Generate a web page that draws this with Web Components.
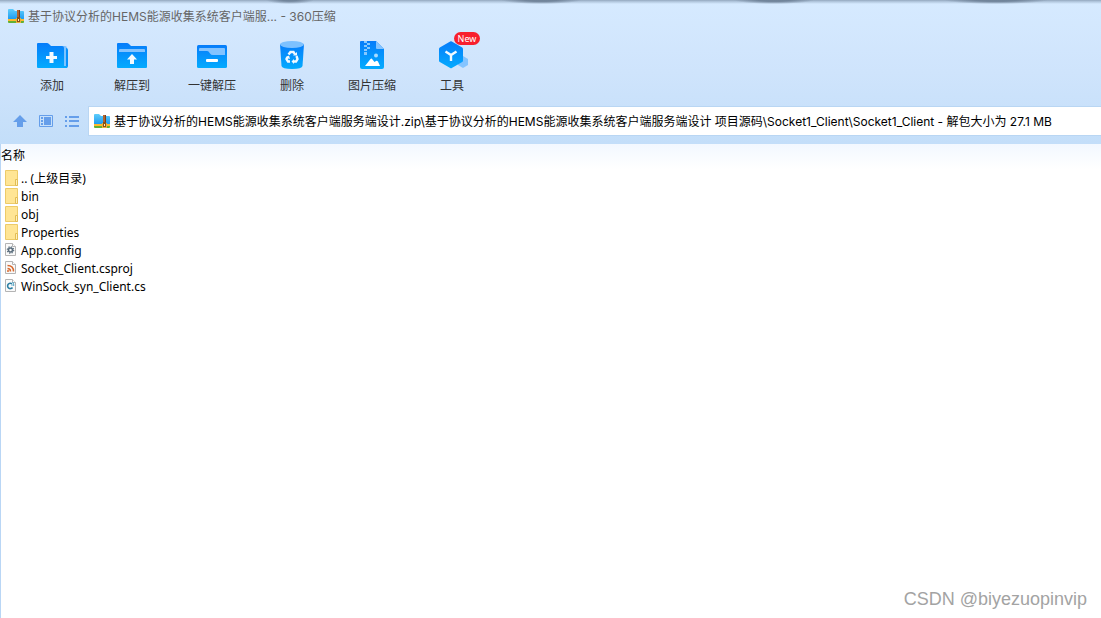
<!DOCTYPE html>
<html lang="zh-CN">
<head>
<meta charset="utf-8">
<meta name="viewport" content="width=device-width, initial-scale=1">
<title>360压缩</title>
<style>
html, body { height: 100%; margin: 0; }
body { font: 12px/18px "Noto Sans", "Noto Sans CJK SC", sans-serif; color: #000; background: #fff; }
</style>
</head>
<body>
<archive-window>
  <title-bar slot="top">基于协议分析的HEMS能源收集系统客户端服... - 360压缩</title-bar>
  <tool-bar slot="top">
    <tool-button icon="add">添加</tool-button>
    <tool-button icon="extract">解压到</tool-button>
    <tool-button icon="quick">一键解压</tool-button>
    <tool-button icon="trash">删除</tool-button>
    <tool-button icon="image">图片压缩</tool-button>
    <tool-button icon="tools" badge="New">工具</tool-button>
  </tool-bar>
  <address-bar slot="top" value="基于协议分析的HEMS能源收集系统客户端服务端设计.zip\基于协议分析的HEMS能源收集系统客户端服务端设计 项目源码\Socket1_Client\Socket1_Client - 解包大小为 27.1 MB"></address-bar>
  <file-list></file-list>
  <water-mark slot="mark">CSDN @biyezuopinvip</water-mark>
</archive-window>

<script>
const blue = id => `<defs><linearGradient id="${id}" x1="0" y1="0" x2="0" y2="1"><stop offset="0" stop-color="#067cfa"/><stop offset="1" stop-color="#04abfe"/></linearGradient></defs>`;
const page = '<path d="M.5 .5H7.500L10.500 3.500V12.500H.5Z" fill="#fafafa" stroke="#b4b4b4"/><path d="M7.500 .5V3.500H10.500" fill="#fff" stroke="#b4b4b4"/>';

const ICONS = {
  app: [16, 16, `<defs><linearGradient id="a" x1="0" y1="0" x2="0" y2="1"><stop offset="0" stop-color="#5fcdfb"/><stop offset="1" stop-color="#1e9cf0"/></linearGradient></defs>
    <path d="M0 2Q0 1 1 1H5L7 3H15Q16 3 16 4V11H0Z" fill="url(#a)"/>
    <path d="M0 11H16V13H0Z" fill="#ffb92c"/><path d="M0 13H16V14Q16 15 15 15H1Q0 15 0 14Z" fill="#62b035"/>
    <path d="M9 2H11V11H9Z" fill="#b0652f"/><path d="M11 2H12V11H11Z" fill="#7b3d1a"/>
    <path d="M8 10H13V15H8Z" fill="#e9b03a"/><path d="M9 9H12V14H9Z" fill="#8a5016"/><path d="M10 11H11V13H10Z" fill="#fff1b5"/>`],
  add: [32, 32, `${blue('g')}<path d="M12 6H29Q31 6 31 8V24H12Z" fill="#7dc0ff"/><path d="M30 8Q32 8 32 10V26Q32 28 30 28Z" fill="#0791fc"/>
    <path d="M1 4Q1 3 2 3H11Q12 3 13 4L15 6H26Q28 6 28 8V28H2Q1 28 1 27Z" fill="url(#g)"/><path d="M28 8H30V28H28Z" fill="#7dc4ff"/><path d="M27 26H31V28H27Z" fill="#05a7fe"/>
    <path d="M13.500 12H17.500V16H21V19H17.500V23H13.500V19H10V16H13.500Z" fill="#f3faff"/>`],
  extract: [32, 32, `${blue('g')}<path d="M1 4Q1 3 2 3H11Q12 3 13 4L15 6H30Q31 6 31 7V27Q31 28 30 28H2Q1 28 1 27Z" fill="url(#g)"/>
    <path d="M3 12V10Q3 9 4 9H28Q29 9 29 10V12Z" fill="#83c3ff"/><path d="M16 14L21 19.500H18V24H14V19.500H11Z" fill="#f3faff"/>`],
  quick: [32, 32, `${blue('g')}<rect x="1" y="5" width="30" height="23" rx="1.500" fill="url(#g)"/>
    <path d="M3 10V9Q3 8 4 8H28Q29 8 29 9V15H17Q15 15 14 13.500L12.500 11.500Q12 11 11 11H3Z" fill="#83c3ff"/><rect x="10" y="19" width="12" height="3" rx="1" fill="#fff"/>`],
  trash: [32, 32, `${blue('g')}<path d="M4 4H28L26.500 26Q26 29 16 29Q6 29 5.500 26Z" fill="url(#g)"/><ellipse cx="16" cy="4.500" rx="12" ry="3.500" fill="#7dc1ff"/>
    <g fill="none" stroke="#f3faff" stroke-width="2.400"><path d="M12.500 14.500L14.500 12H17.500L19 14.500"/><path d="M20.500 16L21.500 19L20 21.500H17"/><path d="M14 21.500H12L10.500 19L12 16.500"/></g>
    <g fill="#f3faff"><path d="M17 15.500H21V12Z"/><path d="M18 19V24L15.500 21.500Z"/><path d="M9.500 17.500L13 15.500L14 19Z"/></g>`],
  image: [32, 32, `${blue('g')}<path d="M5 1H20L28 9V27Q28 29 26 29H6Q4 29 4 27V2Q4 1 5 1Z" fill="url(#g)"/><path d="M20 1L28 9H21Q20 9 20 8Z" fill="#85c4ff"/>
    <path d="M8 1H11V3H8ZM11 3H14V5H11ZM8 5H11V7H8ZM11 7H14V9H11ZM8 9H11V11H8Z" fill="#86c8ff"/><path d="M8 12H11V15H8Z" fill="#86c8ff"/>
    <circle cx="20" cy="15.500" r="2" fill="#a9dcff"/><path d="M9 26L14.500 19Q15.500 18 16.500 19.500L18.500 22L20 21Q21 20.500 22 21.500L24 26Z" fill="#fff"/>`],
  tools: [32, 32, `${blue('g')}<path d="M27 16L32 19V25L27 28L22 25V19Z" fill="#84c4ff"/><path d="M14.200 1.600Q15 1 15.800 1.600L26.200 7.500Q27 8 27 9V20.500Q27 21.500 26.200 22L15.800 28Q15 28.500 14.200 28L3.800 22Q3 21.500 3 20.500V9Q3 8 3.800 7.500Z" fill="url(#g)"/>
    <path d="M9.500 11.500L15 15L20.500 11.500M15 15V21" fill="none" stroke="#f1f9ff" stroke-width="2.400"/>`],
  up: [14, 14, '<path d="M7 1L14 8H10V13H4V8H0Z" fill="#659eea"/>'],
  panel: [14, 14, '<path d="M.5 1.500H13.500V12.500H.5Z" fill="none" stroke="#659eea"/><path d="M2 3H4V5H2ZM2 6H4V8H2ZM2 9H4V11H2ZM5 3H12V11H5Z" fill="#659eea"/>'],
  lines: [16, 14, '<path d="M1 2H3V4H1ZM1 6H3V8H1ZM1 11H3V13H1ZM5 2H15V4H5ZM5 6H15V8H5ZM5 11H15V13H5Z" fill="#659eea"/>'],
  folder: [14, 18, '<path d="M.5 1.500H12.500V16.500H.5Z" fill="#ffe594" stroke="#edcb68"/><path d="M10.500 10.500H12.500V16.500H10.500Z" fill="#fff0b9" stroke="#e2bd55"/>'],
  config: [14, 18, `<g transform="translate(0 2)">${page}<circle cx="5.500" cy="7" r="2" fill="none" stroke="#5b6e7d" stroke-width="1.600"/><circle cx="5.500" cy="7" r="3.200" fill="none" stroke="#5b6e7d" stroke-width="1.200" stroke-dasharray="1.250 1.260"/></g>`],
  project: [14, 18, `<g transform="translate(0 2)">${page}<g fill="none" stroke="#d8682c" stroke-width="1.500"><path d="M2.500 4.500Q8.500 4.500 8.500 10.500M2.500 7.500Q5.500 7.500 5.500 10.500"/></g><circle cx="3" cy="10" r="1" fill="#d8682c"/></g>`],
  source: [14, 18, `<g transform="translate(0 2)">${page}<path d="M7 4.800A2.700 2.700 0 1 0 7.500 8.500" fill="none" stroke="#2c7fa3" stroke-width="1.600"/><path d="M7 3.500H8.500V7M6 6H9.500" fill="none" stroke="#70b2cc"/></g>`]
};

function define(name, render) {
  customElements.define(name, class extends HTMLElement {
    connectedCallback() {
      if (this.shadowRoot) return;
      this.attachShadow({ mode: 'open' }).innerHTML = render(this);
    }
  });
}

define('ui-icon', el => {
  const [w, h, art] = ICONS[el.getAttribute('name')];
  return `<style>:host{display:block;flex:none}svg{display:block}</style>
    <svg width="${w}" height="${h}" viewBox="0 0 ${w} ${h}" aria-hidden="true">${art}</svg>`;
});

define('archive-window', () => `<style>
  :host{display:flex;flex-direction:column;min-height:100vh;position:relative;background:#fff;overflow:hidden}
  header{position:relative;background:linear-gradient(#d6eaff,#cfe4fc 50%,#c3def9)}
  header::before{content:"";position:absolute;inset:0 0 auto;height:6px;background:
    radial-gradient(ellipse 24px 4px at 290px 0,#66798fcc 30%,transparent),
    radial-gradient(ellipse 40px 4px at 541px 0,#66798fcc 40%,transparent),
    radial-gradient(ellipse 40px 4px at 774px 0,#66798fcc 40%,transparent),
    radial-gradient(ellipse 52px 4px at 996px 0,#66798fcc 40%,transparent),
    linear-gradient(#91a5bb,#a8bdd4 1px,#d6eaff00 4px)}
  main{flex:1;border-left:1px solid #b9d6f5}
  </style><header><slot name="top"></slot></header><main><slot></slot></main><slot name="mark"></slot>`);

define('title-bar', () => `<style>
  :host{display:flex;align-items:center;gap:4px;height:32px;padding:0 8px;box-sizing:border-box;position:relative}
  :host{font-family:Inter,"Noto Sans CJK SC",sans-serif}
  h1{margin:0;padding-top:2px;font:inherit;color:#666;white-space:nowrap}
  </style><ui-icon name="app"></ui-icon><h1><slot></slot></h1>`);

define('tool-bar', () => `<style>:host{display:flex;padding:0 12px;height:74px}</style><slot></slot>`);

define('tool-button', el => `<style>
  :host{display:block;width:80px}
  button{position:relative;display:flex;flex-direction:column;align-items:center;gap:5px;width:100%;padding:8px 0 0;border:0;background:none;font:inherit;color:#333;white-space:nowrap}
  .badge{position:absolute;left:42px;top:0;width:26px;height:13px;border-radius:7px;background:#f81f2d;color:#fff;font:9px/13px "Noto Sans",sans-serif}
  </style><button type="button"><ui-icon name="${el.getAttribute('icon')}"></ui-icon><span><slot></slot></span>${el.hasAttribute('badge') ? `<span class="badge">${el.getAttribute('badge')}</span>` : ''}</button>`);

define('address-bar', el => `<style>
  :host{display:flex;align-items:center;padding:0 0 8px 12px}
  button{display:grid;place-items:center;width:26px;height:28px;flex:none;padding:0;border:0;background:none}
  button:first-of-type{width:16px;margin-right:5px}
  label{flex:1;min-width:0;display:flex;align-items:center;gap:4px;height:28px;margin-left:3px;padding-left:5px;background:#fff;border:1px solid #b9d6f3;border-right:0}
  input{flex:1;min-width:0;padding:1px 0 0;border:0;outline:0;background:none;font:12px/18px Inter,"Noto Sans CJK SC",sans-serif;color:#000}
  </style>
  <button type="button" aria-label="向上"><ui-icon name="up"></ui-icon></button>
  <button type="button" aria-label="预览"><ui-icon name="panel"></ui-icon></button>
  <button type="button" aria-label="列表"><ui-icon name="lines"></ui-icon></button>
  <label><ui-icon name="app"></ui-icon><input type="text" aria-label="路径" value="${el.getAttribute('value')}"></label>`);

const FILES = [
  ['folder', '.. (上级目录)'], ['folder', 'bin'], ['folder', 'obj'], ['folder', 'Properties'],
  ['config', 'App.config'], ['project', 'Socket_Client.csproj'], ['source', 'WinSock_syn_Client.cs']
];

define('file-list', () => `<style>
  :host{display:block}
  table{width:100%;border-collapse:collapse}
  th{height:23px;padding:0 0 2px;text-align:left;font-weight:400;background:linear-gradient(#f2f8ff,#fff)}
  td{height:18px;padding:0 0 0 4px}
  .name{display:flex;align-items:center;gap:2px;height:18px;white-space:nowrap}
  .name span{padding-top:2px}
  </style><table><thead><tr><th scope="col">名称</th></tr></thead><tbody>${
    FILES.map(([icon, name]) => `<tr><td><div class="name"><ui-icon name="${icon}"></ui-icon><span>${name}</span></div></td></tr>`).join('')
  }</tbody></table>`);

define('water-mark', () => `<style>
  :host{position:absolute;right:14px;bottom:8px;font:18px/22px "Liberation Sans",sans-serif;color:#a3a3a3;pointer-events:none}
  </style><slot></slot>`);
</script>
</body>
</html>
